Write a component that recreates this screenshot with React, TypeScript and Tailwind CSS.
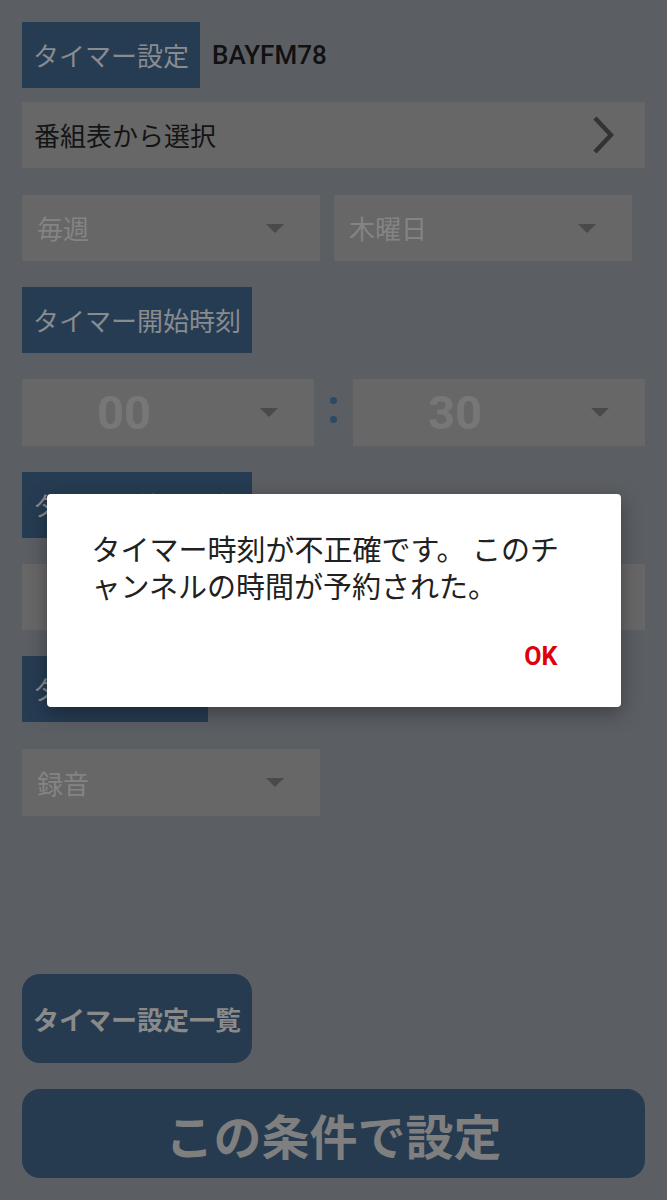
import type { ReactNode } from 'react';

const jp = "font-['Noto_Sans_CJK_JP',sans-serif]";
const latin = "font-['Roboto','Noto_Sans_CJK_JP',sans-serif]";

function Label({ children, width }: { children: ReactNode; width: string }) {
  return (
    <div
      className={`${width} h-[66px] shrink-0 flex items-center px-[11px] bg-[#263c52] text-[26px] leading-none text-[#888b8f] whitespace-nowrap overflow-hidden ${jp}`}
    >
      {children}
    </div>
  );
}

function Caret() {
  return (
    <svg width="18" height="9" viewBox="0 0 18 9" className="shrink-0">
      <path d="M0 0 H18 L9 9 Z" fill="#4a4a4a" />
    </svg>
  );
}

function Select({ value, width, tall }: { value: string; width: string; tall?: boolean }) {
  return (
    <div
      className={`${width} ${tall ? 'h-[67px]' : 'h-[66px]'} flex items-center justify-between bg-[#676767] pl-[15px] pr-[36px]`}
    >
      <span className={`text-[26px] leading-none text-[#848484] ${jp}`}>{value}</span>
      <Caret />
    </div>
  );
}

function TimeSelect({ value }: { value: string }) {
  return (
    <div className="flex-1 h-[67px] flex items-center bg-[#676767] pr-[36px]">
      <span className={`flex-1 text-center pr-[34px] text-[47px] font-bold leading-none text-[#777777] ${latin}`}>
        {value}
      </span>
      <Caret />
    </div>
  );
}

export default function App() {
  return (
    <div className="relative w-full h-[1200px] overflow-hidden bg-[#5b5e63]">
      <div className="h-full flex flex-col px-[22px] pt-[22px] pb-[22px]">
        <div className="flex items-center gap-[12px]">
          <Label width="w-[178px]">タイマー設定</Label>
          <span className={`text-[26px] font-medium leading-none text-[#111111] ${latin}`}>BAYFM78</span>
        </div>

        <div className="mt-[14px] h-[66px] flex items-center justify-between bg-[#676767] pl-[12px] pr-[31px]">
          <span className={`text-[26px] leading-none text-[#141414] ${jp}`}>番組表から選択</span>
          <svg width="22" height="38" viewBox="0 0 22 38">
            <path d="M3 2 L19 19 L3 36" fill="none" stroke="#333333" strokeWidth="4.5" />
          </svg>
        </div>

        <div className="mt-[27px] flex gap-[14px]">
          <Select value="毎週" width="w-[298px]" />
          <Select value="木曜日" width="w-[298px]" />
        </div>

        <div className="mt-[26px]">
          <Label width="w-[230px]">タイマー開始時刻</Label>
        </div>

        <div className="mt-[26px] flex items-stretch">
          <TimeSelect value="00" />
          <div className="w-[39px] flex flex-col items-center justify-center gap-[12px] pb-[6px]">
            <div className="w-[7px] h-[7px] rounded-full bg-[#2a4a66]" />
            <div className="w-[7px] h-[7px] rounded-full bg-[#2a4a66]" />
          </div>
          <TimeSelect value="30" />
        </div>

        <div className="mt-[26px]">
          <Label width="w-[230px]">タイマー終了時刻</Label>
        </div>

        <div className="mt-[26px] h-[66px] bg-[#676767]" />

        <div className="mt-[26px]">
          <Label width="w-[186px]">タイマー種別</Label>
        </div>

        <div className="mt-[27px]">
          <Select value="録音" width="w-[298px]" tall />
        </div>

        <button
          className={`mt-auto w-[230px] h-[89px] rounded-[18px] bg-[#263b50] text-[26px] font-bold text-[#8a8a8a] leading-none ${jp}`}
        >
          タイマー設定一覧
        </button>
        <button
          className={`mt-[26px] w-full h-[89px] rounded-[18px] bg-[#263b50] text-[48px] font-bold text-[#7f7f7f] leading-none ${jp}`}
        >
          この条件で設定
        </button>
      </div>

      <div className="absolute inset-0 flex items-center justify-center">
        <div className="w-[574px] rounded-[4px] bg-white shadow-[0_6px_20px_rgba(0,0,0,0.35)] pt-[36px] pb-[38px]">
          <p className={`pl-[45px] pr-[46px] text-[29px] leading-[37px] text-[#212121] ${jp}`}>
            タイマー時刻が不正確です。 このチャンネルの時間が予約された。
          </p>
          <div className="mt-[40px] flex justify-end pr-[63px]">
            <span className={`text-[25px] font-bold leading-none text-[#e0000b] ${latin}`}>OK</span>
          </div>
        </div>
      </div>
    </div>
  );
}
